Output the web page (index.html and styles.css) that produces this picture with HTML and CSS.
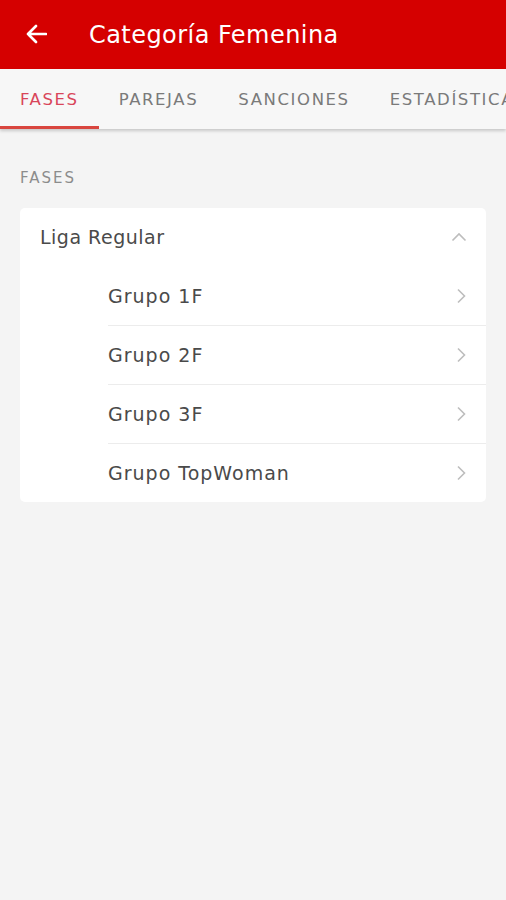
FILE: index.html
```html
<!DOCTYPE html>
<html lang="es">
<head>
<meta charset="utf-8">
<title>Categoría Femenina</title>
<link rel="stylesheet" href="styles.css">
</head>
<body>
<header class="appbar">
  <svg class="back" width="22" height="20" viewBox="0 0 22 20"><path d="M21 10H3M11 2L3 10l8 8" fill="none" stroke="#fff" stroke-width="2.6" stroke-linecap="round" stroke-linejoin="round"/></svg>
  <h1 class="title">Categoría Femenina</h1>
</header>
<nav class="tabs">
  <div class="tab active">FASES</div>
  <div class="tab">PAREJAS</div>
  <div class="tab">SANCIONES</div>
  <div class="tab">ESTADÍSTICAS</div>
</nav>
<main class="content">
  <div class="section-label">FASES</div>
  <div class="card">
    <div class="group-head">
      <span>Liga Regular</span>
      <svg width="16" height="10" viewBox="0 0 16 10"><path d="M1.5 8.5L8 2l6.5 6.5" fill="none" stroke="#bdbdbd" stroke-width="1.6"/></svg>
    </div>
    <div class="row"><span>Grupo 1F</span><svg class="chev" width="10" height="16" viewBox="0 0 10 16"><path d="M2 1.5L8.5 8 2 14.5" fill="none" stroke="#bdbdbd" stroke-width="1.6"/></svg></div>
    <div class="row"><span>Grupo 2F</span><svg class="chev" width="10" height="16" viewBox="0 0 10 16"><path d="M2 1.5L8.5 8 2 14.5" fill="none" stroke="#bdbdbd" stroke-width="1.6"/></svg></div>
    <div class="row"><span>Grupo 3F</span><svg class="chev" width="10" height="16" viewBox="0 0 10 16"><path d="M2 1.5L8.5 8 2 14.5" fill="none" stroke="#bdbdbd" stroke-width="1.6"/></svg></div>
    <div class="row"><span>Grupo TopWoman</span><svg class="chev" width="10" height="16" viewBox="0 0 10 16"><path d="M2 1.5L8.5 8 2 14.5" fill="none" stroke="#bdbdbd" stroke-width="1.6"/></svg></div>
  </div>
</main>
</body>
</html>
```
FILE: styles.css
```css
* { box-sizing: border-box; }
html, body { margin: 0; padding: 0; }
body {
  width: 506px;
  height: 900px;
  overflow: hidden;
  background: #f4f4f4;
  font-family: "DejaVu Sans", "Open Sans", sans-serif;
  color: #444;
}
.appbar {
  height: 69px;
  background: #d50000;
  display: flex;
  align-items: center;
  padding-left: 25px;
}
.back { display: block; margin-top: -1px; }
.title {
  margin: 0 0 0 42px;
  font-size: 24px;
  font-weight: 400;
  color: #fff;
  letter-spacing: 0.45px;
}
.tabs {
  height: 60px;
  background: #f7f7f7;
  display: flex;
  white-space: nowrap;
  overflow: hidden;
  box-shadow: 0 2px 3px rgba(0,0,0,0.18);
  position: relative;
}
.tab {
  flex: none;
  padding: 0 20px;
  display: flex;
  align-items: center;
  font-size: 16.5px;
  color: #7a7a7a;
  letter-spacing: 1.6px;
  border-bottom: 3px solid transparent;
  padding-top: 3px;
}
.tab.active {
  color: #d9465a;
  border-bottom-color: #d9463f;
}
.content { padding: 0 20px; }
.section-label {
  padding-top: 40px;
  height: 79px;
  font-size: 15px;
  color: #8c8c8c;
  letter-spacing: 2px;
}
.card {
  background: #fff;
  border-radius: 5px;
  overflow: hidden;
}
.group-head {
  height: 58px;
  display: flex;
  align-items: center;
  justify-content: space-between;
  padding: 0 19px 0 20px;
  font-size: 19px;
  letter-spacing: 0.5px;
  color: #4a4a4a;
}
.row {
  margin-left: 88px;
  height: 59px;
  display: flex;
  align-items: center;
  justify-content: space-between;
  padding-right: 20px;
  font-size: 19px;
  letter-spacing: 1px;
  color: #4a4a4a;
  border-top: 1px solid #ececec;
}
.group-head + .row { border-top: none; }
.chev { display: block; }
```
